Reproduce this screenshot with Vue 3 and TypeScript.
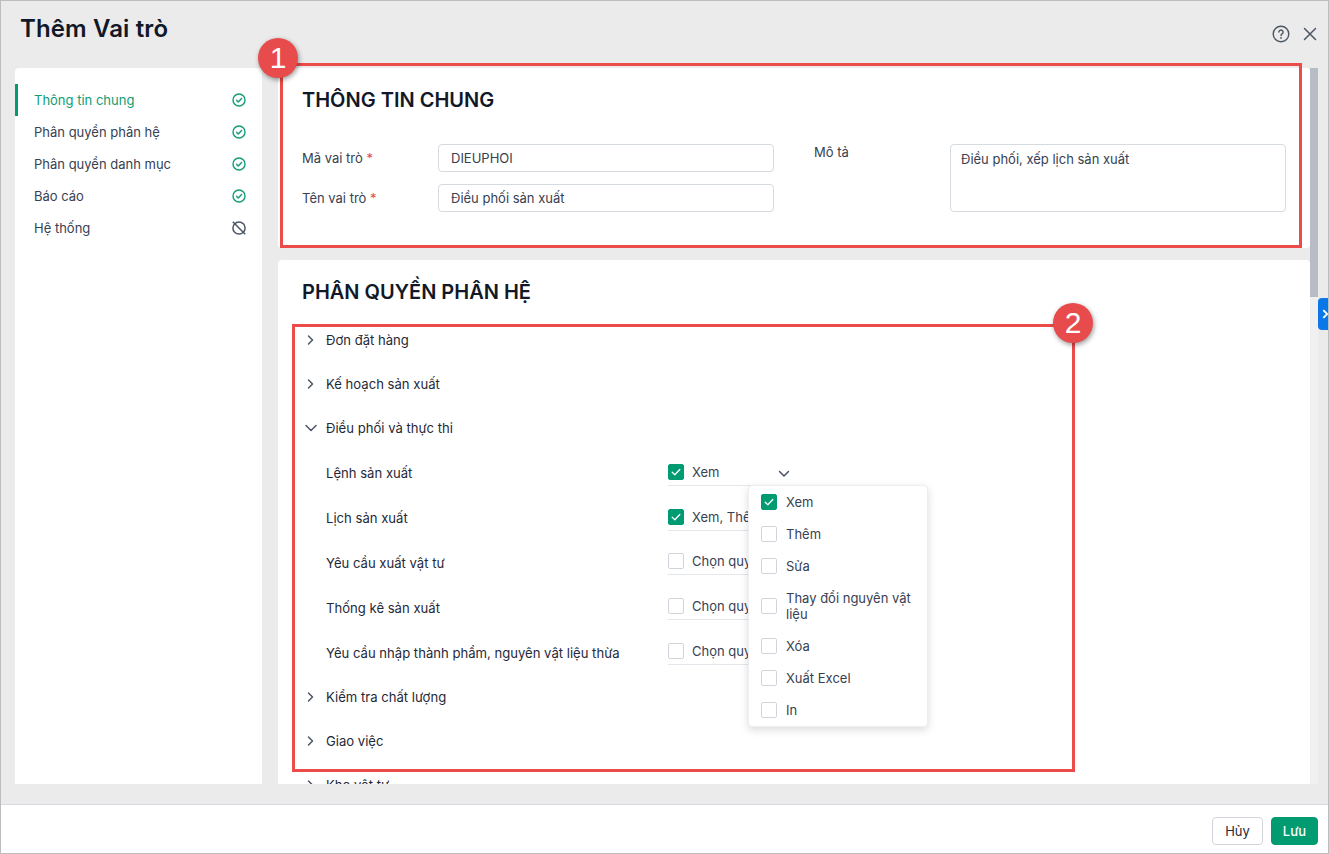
<script setup lang="ts">
const navItems = [
  { label: 'Thông tin chung', active: true, done: true },
  { label: 'Phân quyền phân hệ', active: false, done: true },
  { label: 'Phân quyền danh mục', active: false, done: true },
  { label: 'Báo cáo', active: false, done: true },
  { label: 'Hệ thống', active: false, done: false },
]
const subRows = [
  { label: 'Lệnh sản xuất', value: 'Xem', checked: true },
  { label: 'Lịch sản xuất', value: 'Xem, Thêm', checked: true },
  { label: 'Yêu cầu xuất vật tư', value: 'Chọn quyền', checked: false },
  { label: 'Thống kê sản xuất', value: 'Chọn quyền', checked: false },
  { label: 'Yêu cầu nhập thành phẩm, nguyên vật liệu thừa', value: 'Chọn quyền', checked: false },
]
const menuItems = [
  { label: 'Xem', checked: true },
  { label: 'Thêm', checked: false },
  { label: 'Sửa', checked: false },
  { label: 'Thay đổi nguyên vật liệu', checked: false },
  { label: 'Xóa', checked: false },
  { label: 'Xuất Excel', checked: false },
  { label: 'In', checked: false },
]
</script>

<template>
  <div class="dialog">
    <header class="head">
      <h1 class="dialog-title">Thêm Vai trò</h1>
      <div class="head-actions">
        <svg class="icon-help" width="18" height="18" viewBox="0 0 18 18" fill="none" stroke="#4b5563" stroke-width="1.4" stroke-linecap="round">
          <circle cx="9" cy="9" r="7.8" />
          <path d="M6.9 7.1a2.1 2.1 0 1 1 3.2 1.8c-.7.4-1.1.8-1.1 1.6" />
          <path d="M9 12.8v.1" stroke-width="1.7" />
        </svg>
        <svg width="14" height="14" viewBox="0 0 14 14" fill="none" stroke="#4b5563" stroke-width="1.5" stroke-linecap="round">
          <path d="M1.5 1.5l11 11M12.5 1.5l-11 11" />
        </svg>
      </div>
    </header>

    <div class="body">
      <nav class="side">
        <div v-for="item in navItems" :key="item.label" class="nav-item" :class="{ active: item.active }">
          <span>{{ item.label }}</span>
          <svg v-if="item.done" width="14" height="14" viewBox="0 0 14 14" fill="none" stroke="#0f9d76" stroke-width="1.4" stroke-linecap="round" stroke-linejoin="round">
            <circle cx="7" cy="7" r="6" />
            <path d="M4.5 7.2l1.8 1.7 3.3-3.5" />
          </svg>
          <svg v-else class="off-icon" width="16" height="16" viewBox="0 0 16 16" fill="none" stroke="#4b5563" stroke-width="1.5">
            <circle cx="8" cy="8" r="6.1" />
            <path d="M1.8 1.8l12.4 12.4" />
          </svg>
        </div>
      </nav>

      <div class="viewport">
        <section class="card card-info">
          <h2 class="card-title">THÔNG TIN CHUNG</h2>
          <div class="form-grid">
            <div class="form-col">
              <div class="field">
                <label>Mã vai trò <em>*</em></label>
                <div class="input">DIEUPHOI</div>
              </div>
              <div class="field">
                <label>Tên vai trò <em>*</em></label>
                <div class="input">Điều phối sản xuất</div>
              </div>
            </div>
            <div class="field field-top">
              <label>Mô tả</label>
              <div class="textarea">Điều phối, xếp lịch sản xuất</div>
            </div>
          </div>
        </section>

        <section class="card card-perm">
          <h2 class="card-title">PHÂN QUYỀN PHÂN HỆ</h2>
          <div class="tree">
            <div class="tree-row">
              <span class="chev-wrap"><svg width="10" height="12" viewBox="0 0 10 12"><path d="M2.5 2l4 4-4 4" /></svg></span>
              <span>Đơn đặt hàng</span>
            </div>
            <div class="tree-row">
              <span class="chev-wrap"><svg width="10" height="12" viewBox="0 0 10 12"><path d="M2.5 2l4 4-4 4" /></svg></span>
              <span>Kế hoạch sản xuất</span>
            </div>
            <div class="tree-row">
              <span class="chev-wrap"><svg width="12" height="10" viewBox="0 0 12 10"><path d="M1 2.5l5 5 5-5" /></svg></span>
              <span>Điều phối và thực thi</span>
            </div>

            <div class="sub-list">
              <div v-for="row in subRows" :key="row.label" class="sub-row">
                <span class="sub-label">{{ row.label }}</span>
                <div class="select">
                  <span class="box" :class="{ on: row.checked }">
                    <svg v-if="row.checked" width="12" height="12" viewBox="0 0 12 12"><path d="M2.2 6.2l2.6 2.5 5-5.2" /></svg>
                  </span>
                  <span>{{ row.value }}</span>
                </div>
              </div>
            </div>

            <div class="tree-row">
              <span class="chev-wrap"><svg width="10" height="12" viewBox="0 0 10 12"><path d="M2.5 2l4 4-4 4" /></svg></span>
              <span>Kiểm tra chất lượng</span>
            </div>
            <div class="tree-row">
              <span class="chev-wrap"><svg width="10" height="12" viewBox="0 0 10 12"><path d="M2.5 2l4 4-4 4" /></svg></span>
              <span>Giao việc</span>
            </div>
            <div class="tree-row">
              <span class="chev-wrap"><svg width="10" height="12" viewBox="0 0 10 12"><path d="M2.5 2l4 4-4 4" /></svg></span>
              <span>Kho vật tư</span>
            </div>
          </div>
        </section>
      </div>

      <div class="scrollbar"><div class="thumb"></div></div>
    </div>

    <footer class="foot">
      <button class="btn btn-cancel" type="button">Hủy</button>
      <button class="btn btn-save" type="button">Lưu</button>
    </footer>

    <!-- floating select menu -->
    <div class="caret-notch">
      <svg width="12" height="8" viewBox="0 0 12 8" fill="none" stroke="#4b5563" stroke-width="1.5" stroke-linecap="round" stroke-linejoin="round"><path d="M1.5 1.5L6 6l4.5-4.5" /></svg>
    </div>
    <div class="menu">
      <div v-for="item in menuItems" :key="item.label" class="menu-item">
        <span class="box" :class="{ on: item.checked }">
          <svg v-if="item.checked" width="12" height="12" viewBox="0 0 12 12"><path d="M2.2 6.2l2.6 2.5 5-5.2" /></svg>
        </span>
        <span class="menu-text">{{ item.label }}</span>
      </div>
    </div>

    <!-- tutorial annotations -->
    <div class="mark mark-one"></div>
    <div class="mark mark-two"></div>
    <div class="badge badge-one">1</div>
    <div class="badge badge-two">2</div>
    <div class="side-tab">
      <svg width="8" height="12" viewBox="0 0 8 12" fill="none" stroke="#fff" stroke-width="2.2"><path d="M1.5 1.5L6 6l-4.5 4.5" /></svg>
    </div>
  </div>
</template>

<style>
html, body { margin: 0; padding: 0; }
</style>

<style scoped>
* { box-sizing: border-box; }
.dialog {
  position: relative;
  width: 1329px;
  height: 854px;
  display: flex;
  flex-direction: column;
  background: #ebebeb;
  border: 1px solid #bdbdbd;
  font-family: Inter, "Noto Sans", sans-serif;
  font-size: 13px;
  line-height: 16px;
  color: #1f2937;
  overflow: hidden;
}
.head {
  height: 67px;
  flex: none;
  display: flex;
  justify-content: space-between;
  padding: 12px 11px 0 19px;
}
.dialog-title {
  margin: 0;
  font-size: 24px;
  line-height: 32px;
  font-weight: 600;
  letter-spacing: 0.12px;
  color: #111827;
}
.head-actions {
  display: flex;
  align-items: center;
  gap: 13px;
  height: 18px;
  margin-top: 12px;
}
.body {
  flex: 1;
  min-height: 0;
  display: flex;
  padding: 0 10px 20px 14px;
}
.side {
  width: 247px;
  flex: none;
  background: #fff;
  border-radius: 4px 4px 0 0;
  padding-top: 16px;
  margin-right: 16px;
}
.nav-item {
  height: 32px;
  display: flex;
  align-items: center;
  justify-content: space-between;
  padding: 0 16px 0 19px;
  color: #374151;
}
.off-icon { margin-right: -1px; }
.nav-item.active {
  color: #0f9d76;
  box-shadow: inset 3px 0 0 #009b71;
}
.viewport {
  width: 1032px;
  flex: none;
  overflow: hidden;
  display: flex;
  flex-direction: column;
  gap: 12px;
}
.card {
  background: #fff;
  border-radius: 4px;
  flex: none;
  padding: 0 24px;
}
.card-info { height: 180px; padding-top: 20px; }
.card-perm { height: 560px; padding-top: 20px; border-radius: 4px 4px 0 0; }
.card-title {
  margin: 0;
  font-size: 20px;
  line-height: 24px;
  font-weight: 600;
  color: #111827;
}
.form-grid {
  margin-top: 32px;
  display: grid;
  grid-template-columns: 472px 472px;
  column-gap: 40px;
}
.form-col { display: flex; flex-direction: column; gap: 12px; }
.field { display: flex; align-items: center; }
.field-top { align-items: flex-start; }
.field label { width: 136px; flex: none; color: #374151; }
.field em { color: #e5484d; font-style: normal; }
.input {
  flex: 1;
  height: 28px;
  padding: 5px 12px;
  border: 1px solid #d5d9e0;
  border-radius: 4px;
  color: #374151;
}
.textarea {
  flex: 1;
  height: 68px;
  padding: 6px 10px;
  border: 1px solid #d5dbe0;
  border-radius: 4px;
  color: #374151;
}
.tree { margin-top: 14px; font-size: 13.1px; }
.tree-row {
  height: 44px;
  display: flex;
  align-items: center;
  color: #1f2937;
}
.chev-wrap {
  width: 24px;
  flex: none;
  display: flex;
  justify-content: center;
  padding-right: 6px;
}
.chev-wrap svg {
  display: block;
  fill: none;
  stroke: #4b5563;
  stroke-width: 1.5;
  stroke-linecap: round;
  stroke-linejoin: round;
}
.sub-list { padding-top: 1px; }
.sub-row {
  height: 44.8px;
  display: flex;
  align-items: center;
  padding-left: 24px;
}
.sub-label { width: 342px; flex: none; }
.select {
  width: 200px;
  height: 26px;
  display: flex;
  align-items: center;
  gap: 8px;
  margin-bottom: 1px;
  padding-bottom: 1px;
  border-bottom: 1px solid #e3e6ea;
  color: #374151;
  font-size: 13px;
  overflow: hidden;
  white-space: nowrap;
}
.box {
  width: 16px;
  height: 16px;
  flex: none;
  display: flex;
  align-items: center;
  justify-content: center;
  border: 1px solid #d1d5db;
  border-radius: 2px;
  background: #fff;
}
.box.on { background: #009b71; border-color: #009b71; }
.box path {
  fill: none;
  stroke: #fff;
  stroke-width: 1.3;
  stroke-linecap: round;
  stroke-linejoin: round;
}
.scrollbar {
  width: 8px;
  flex: none;
  background: #f0f0f0;
}
.thumb { height: 229px; background: #b8bcc4; }
.foot {
  height: 49px;
  flex: none;
  display: flex;
  justify-content: flex-end;
  gap: 8px;
  padding: 12px 10px 0 0;
  background: #fff;
  border-top: 1px solid #d5dbe0;
}
.btn {
  height: 28px;
  border-radius: 4px;
  font-family: inherit;
  font-size: 13px;
  padding: 0;
}
.btn-cancel { width: 51px; background: #fff; border: 1px solid #d1d5db; color: #1f2937; font-weight: 400; }
.btn-save { width: 47px; background: #009b71; border: 1px solid #009b71; color: #fff; font-weight: 500; }
.caret-notch {
  position: absolute;
  left: 774px;
  top: 465px;
  width: 18px;
  height: 21px;
  background: #fff;
  padding: 4px 3px 0;
  display: flex;
  justify-content: center;
  align-items: flex-start;
}
.menu {
  position: absolute;
  left: 747px;
  top: 484px;
  width: 180px;
  background: #fff;
  border: 1px solid #eceef1;
  border-radius: 4px;
  box-shadow: 0 3px 8px rgba(0, 0, 0, 0.14);
  color: #374151;
}
.menu-item {
  min-height: 32px;
  display: flex;
  align-items: center;
  gap: 9px;
  padding: 8px 12px;
}
.mark {
  position: absolute;
  border: 3px solid #eb4b49;
  pointer-events: none;
}
.mark-one { left: 279px; top: 62px; width: 1022px; height: 185px; }
.mark-two { left: 291px; top: 323px; width: 783px; height: 448px; }
.badge {
  position: absolute;
  width: 40px;
  height: 40px;
  border-radius: 50%;
  background: #e84b4b;
  color: #fff;
  font-family: "Liberation Sans", Arial, sans-serif;
  font-size: 30px;
  line-height: 40px;
  text-align: center;
  box-shadow: 1px 2px 5px rgba(0, 0, 0, 0.4);
}
.badge-one { left: 257px; top: 37px; }
.badge-two { left: 1052px; top: 302px; }
.side-tab {
  position: absolute;
  left: 1317px;
  top: 297px;
  width: 11px;
  height: 32px;
  background: #0a78e8;
  border-radius: 4px 0 0 4px;
  display: flex;
  align-items: center;
  padding-left: 4px;
  overflow: hidden;
}
</style>
